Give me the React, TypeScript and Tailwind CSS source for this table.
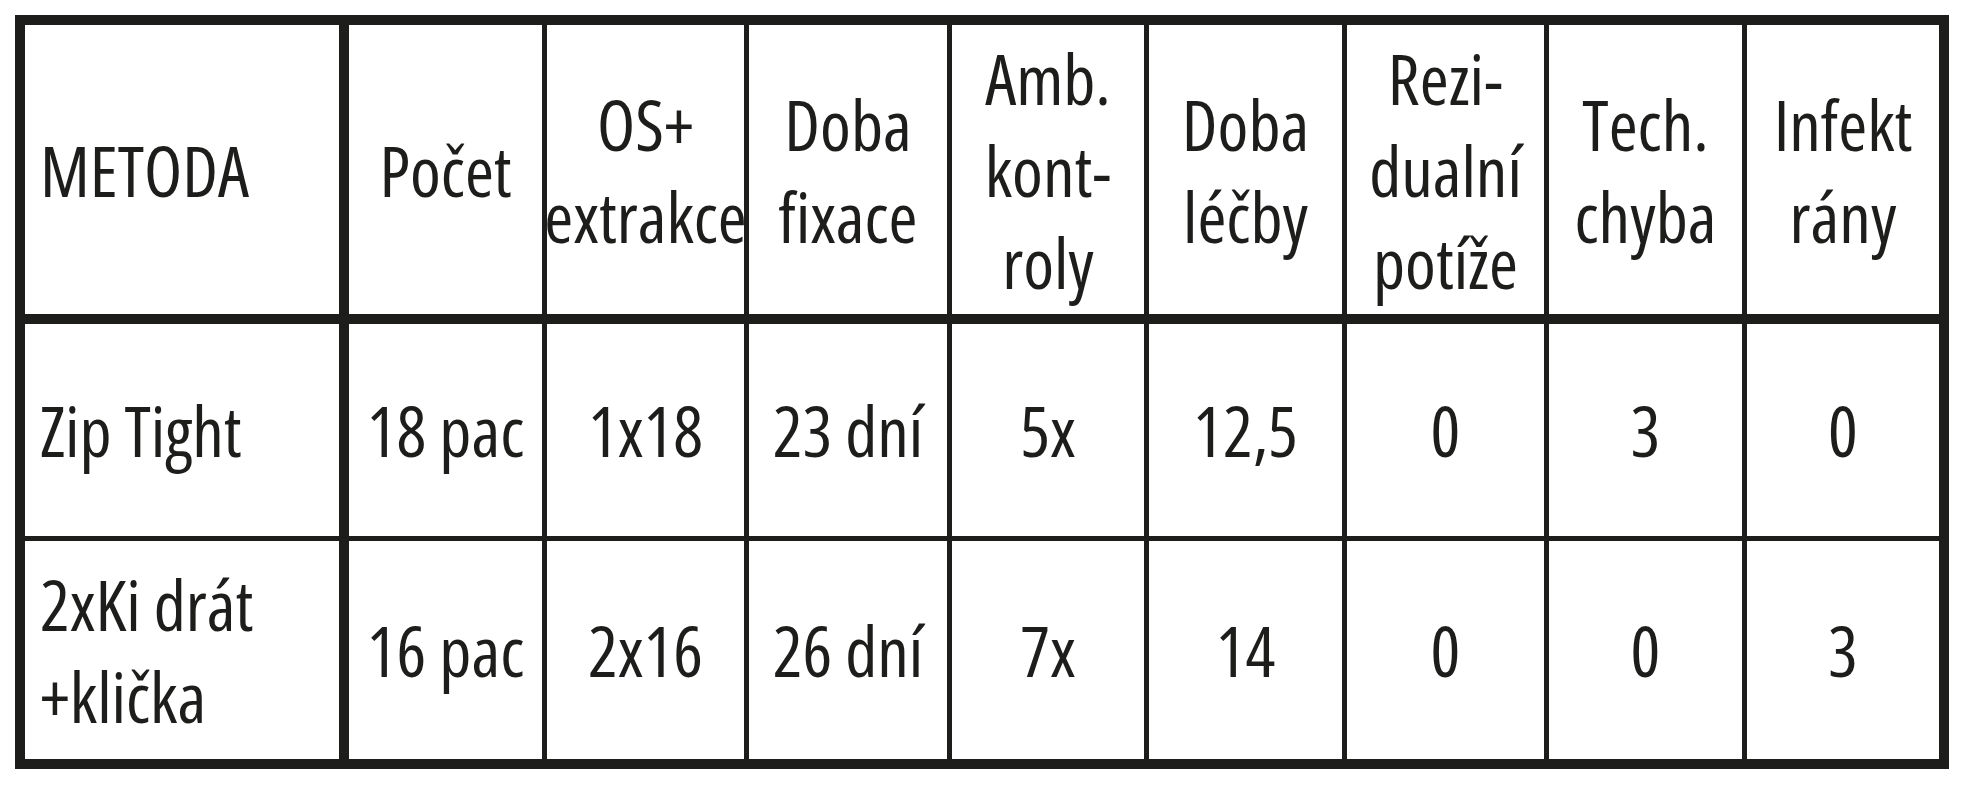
import React from "react";

const widths = [
  "w-[324px]",
  "w-[198px]",
  "w-[202px]",
  "w-[203px]",
  "w-[197px]",
  "w-[198px]",
  "w-[202px]",
  "w-[198px]",
  "w-[192px]",
];

const header = [
  ["METODA"],
  ["Počet"],
  ["OS+", "extrakce"],
  ["Doba", "fixace"],
  ["Amb.", "kont-", "roly"],
  ["Doba", "léčby"],
  ["Rezi-", "dualní", "potíže"],
  ["Tech.", "chyba"],
  ["Infekt", "rány"],
];

const rows = [
  [["Zip Tight"], ["18 pac"], ["1x18"], ["23 dní"], ["5x"], ["12,5"], ["0"], ["3"], ["0"]],
  [["2xKi drát", "+klička"], ["16 pac"], ["2x16"], ["26 dní"], ["7x"], ["14"], ["0"], ["0"], ["3"]],
];

function Cell({ lines, col, rowIdx }: { lines: string[]; col: number; rowIdx: number }) {
  const last = col === widths.length - 1;
  const right = last ? "" : col === 0 ? "border-r-[10px]" : "border-r-[5px]";
  const bottom = rowIdx === 0 ? "border-b-[10px]" : rowIdx === 1 ? "border-b-[5px]" : "";
  const height = rowIdx === 0 ? "h-[299px]" : rowIdx === 1 ? "h-[217px]" : "h-[218px]";
  const align = col === 0 ? "items-start pl-[15px] text-left" : "items-center text-center";
  return (
    <div
      className={`${widths[col]} ${height} ${right} ${bottom} ${align} border-[#1d1d1b] flex flex-col justify-center whitespace-nowrap`}
    >
      {lines.map((l) => (
        <span key={l}>{l}</span>
      ))}
    </div>
  );
}

export default function App() {
  const all = [header, ...rows];
  return (
    <div className="min-h-screen bg-white pt-[15px] pl-[15px] font-['Open_Sans','Noto_Sans',sans-serif] font-stretch-84% font-[380] text-[70px] leading-[92px] text-[#1d1d1b]">
      <div className="w-[1934px] border-[10px] border-[#1d1d1b] flex flex-col">
        {all.map((r, ri) => (
          <div key={ri} className="flex">
            {r.map((lines, ci) => (
              <Cell key={ci} lines={lines} col={ci} rowIdx={ri} />
            ))}
          </div>
        ))}
      </div>
    </div>
  );
}
